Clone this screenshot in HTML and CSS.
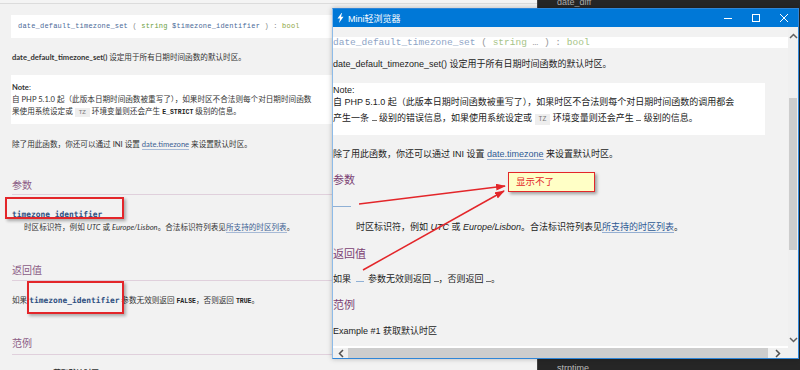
FILE: index.html
```html
<!DOCTYPE html>
<html lang="zh-CN">
<head>
  <meta charset="UTF-8">
  <title>Mini轻浏览器</title>
  <link rel="stylesheet" href="styles.css">
</head>
<body>

<div class="desktop">

  <!-- PHP manual page behind the window -->
  <div class="manual">
    <div class="synopsis">
      <span class="fn">date_default_timezone_set</span> <span class="op">(</span> <span class="type">string</span> <span class="fn">$timezone_identifier</span> <span class="op">) :</span> <span class="ret">bool</span>
    </div>
    <p class="lead"><b>date_default_timezone_set()</b> 设定用于所有日期时间函数的默认时区。</p>
    <div class="note">
      <div><b>Note</b>:</div>
      <div>自 PHP 5.1.0 起（此版本日期时间函数被重写了），如果时区不合法则每个对日期时间函数</div>
      <div>果使用系统设定或 <code class="tz">TZ</code> 环境变量则还会产生 <code class="const">E_STRICT</code> 级别的信息。</div>
    </div>
    <p class="text">除了用此函数，你还可以通过 INI 设置 <a class="link">date.timezone</a> 来设置默认时区。</p>

    <h2 class="section">参数</h2>
    <div class="term"><code>timezone_identifier</code></div>
    <p class="desc">时区标识符，例如 <i>UTC</i> 或 <i>Europe/Lisbon</i>。合法标识符列表见<a class="link">所支持的时区列表</a>。</p>

    <h2 class="section second">返回值</h2>
    <p class="text ret">如果 <code class="param">timezone_identifier</code> 参数无效则返回 <code class="const">FALSE</code>，否则返回 <code class="const">TRUE</code>。</p>

    <h2 class="section third">范例</h2>
    <p class="text example"><b>Example #1 获取默认时区</b></p>
  </div>

  <!-- dark function list on the right -->
  <div class="sidebar">
    <div class="side-item top">date_diff</div>
    <div class="side-item bottom">strptime</div>
  </div>
</div>

<!-- the little browser window -->
<div class="window">
  <div class="titlebar">
    <svg class="app-icon" width="7" height="10" viewBox="0 0 7 10"><path d="M4.5 0 L0.5 5.5 L3 5.5 L2 10 L6.5 3.8 L4 3.8 L5 0 Z" fill="#fff"/></svg>
    <span class="title">Mini轻浏览器</span>
    <div class="controls">
      <span class="ctl"><svg width="8" height="8" viewBox="0 0 8 8"><path d="M0 4.5 H8" stroke="#fff" stroke-width="1"/></svg></span>
      <span class="ctl"><svg width="8" height="8" viewBox="0 0 8 8"><rect x="0.5" y="0.5" width="7" height="7" fill="none" stroke="#fff" stroke-width="1"/></svg></span>
      <span class="ctl"><svg width="8" height="8" viewBox="0 0 8 8"><path d="M0 0 L8 8 M8 0 L0 8" stroke="#fff" stroke-width="1"/></svg></span>
    </div>
  </div>

  <div class="frame">
    <div class="viewport">
      <div class="m-code"><span class="m-fn">date_default_timezone_set</span> ( <span class="m-type">string</span> … ) : <span class="m-type">bool</span></div>
      <p class="m-lead">date_default_timezone_set() 设定用于所有日期时间函数的默认时区。</p>
      <div class="m-note">
        <div class="m-note-title">Note:</div>
        <p>自 PHP 5.1.0 起（此版本日期时间函数被重写了），如果时区不合法则每个对日期时间函数的调用都会<br>产生一条 <span class="blank"></span> 级别的错误信息，如果使用系统设定或 <code class="m-tz">TZ</code> 环境变量则还会产生 <span class="blank"></span> 级别的信息。</p>
      </div>
      <p class="m-text">除了用此函数，你还可以通过 INI 设置 <a class="m-link">date.timezone</a> 来设置默认时区。</p>
      <h2 class="m-head">参数</h2>
      <div class="m-term"></div>
      <p class="m-desc">时区标识符，例如 <i>UTC</i> 或 <i>Europe/Lisbon</i>。合法标识符列表见<a class="m-link">所支持的时区列表</a>。</p>
      <h2 class="m-head ret-head">返回值</h2>
      <p class="m-ret">如果 <span class="m-param"></span> 参数无效则返回 <span class="blank"></span>，否则返回 <span class="blank"></span>。</p>
      <h2 class="m-head">范例</h2>
      <p class="m-ex">Example #1 获取默认时区</p>
    </div>

    <div class="vscroll">
      <span class="arrow"><svg width="9" height="6" viewBox="0 0 9 6"><path d="M1 5 L4.5 1.5 L8 5" fill="none" stroke="#606060" stroke-width="1.5"/></svg></span>
      <span class="vthumb"></span>
      <span class="arrow"><svg width="9" height="6" viewBox="0 0 9 6"><path d="M1 1 L4.5 4.5 L8 1" fill="none" stroke="#606060" stroke-width="1.5"/></svg></span>
    </div>

    <div class="hscroll">
      <span class="harrow left"><svg width="6" height="9" viewBox="0 0 6 9"><path d="M5 1 L1.5 4.5 L5 8" fill="none" stroke="#505050" stroke-width="1.5"/></svg></span>
      <span class="hthumb"></span>
      <span class="harrow right"><svg width="6" height="9" viewBox="0 0 6 9"><path d="M1 1 L4.5 4.5 L1 8" fill="none" stroke="#505050" stroke-width="1.5"/></svg></span>
    </div>
    <div class="corner"></div>
  </div>
</div>

<!-- red annotations drawn on top of the screenshot -->
<div class="mark mark-term"></div>
<div class="mark mark-param"></div>
<div class="callout">显示不了</div>
<svg class="arrows" width="800" height="370" viewBox="0 0 800 370">
  <defs>
    <marker id="head" markerWidth="10" markerHeight="7" refX="9" refY="3.5" orient="auto" markerUnits="userSpaceOnUse">
      <path d="M0 0 L10 3.5 L0 7 Z" fill="#e3262a"/>
    </marker>
  </defs>
  <line x1="359" y1="204" x2="505" y2="186" stroke="#e3262a" stroke-width="1.5" marker-end="url(#head)"/>
  <line x1="363" y1="270" x2="504" y2="191" stroke="#e3262a" stroke-width="1.5" marker-end="url(#head)"/>
</svg>

</body>
</html>
```

FILE: styles.css
```css
body {
  margin: 0;
  width: 800px;
  height: 370px;
  overflow: hidden;
  position: relative;
  background-color: #f4f4f4;
  font-family: "Lato", "Noto Sans CJK SC", sans-serif;
  color: #333;
}

p, h2 {
  margin: 0;
}

.desktop {
  display: flex;
  height: 370px;
}

/* ---------- manual page ---------- */

.manual {
  width: 537px;
  flex: none;
  box-sizing: border-box;
  margin-top: 3px;
  padding: 11px 0 0 12px;
  border-top: 1px solid #dcdcdc;
  background-color: #f2f2f2;
  font-size: 7.6px;
  line-height: 12px;
  white-space: nowrap;
  overflow: hidden;
}

.synopsis {
  margin-left: -1px;
  height: 23px;
  line-height: 23px;
  padding-left: 7px;
  background: #fff;
  font-family: "Liberation Mono", monospace;
  font-size: 7px;
  letter-spacing: 0.2px;
}

.synopsis .fn {
  color: #4b6a98;
}

.synopsis .op {
  color: #888;
}

.synopsis .type {
  color: #6c9e3e;
}

.synopsis .ret {
  color: #8ea53f;
}

.lead {
  margin-top: 13px;
}

.note {
  margin: 12px 0 0 -1px;
  padding: 6px 0 5px 1px;
  background: #fff;
}

.note b {
  font-weight: 700;
}

code {
  font-family: "DejaVu Sans Mono", monospace;
}

.const {
  font-family: "Liberation Mono", monospace;
  font-size: 6.5px;
  font-weight: bold;
  color: #222;
}

.tz {
  font-family: "Liberation Mono", monospace;
  font-size: 6px;
  color: #777;
  background: #eee;
  padding: 1px 4px;
}

.text {
  margin-top: 14px;
}

.link {
  color: #3d5f92;
  border-bottom: 1px solid #a7bad6;
}

.section {
  margin-top: 28px;
  padding-bottom: 2px;
  margin-right: 12px;
  border-bottom: 1px solid #e0d0dc;
  font-size: 10px;
  line-height: 14px;
  font-weight: normal;
  color: #8c5d86;
}

.section.second {
  margin-top: 30px;
  padding-bottom: 3px;
}

.section.third {
  margin-top: 28px;
  padding-bottom: 4px;
}

.term {
  margin-top: 13px;
}

.term code,
.param {
  font-size: 7.9px;
  font-weight: bold;
  color: #2e4f80;
}

.desc {
  padding-left: 12px;
}

.ret {
  margin-top: 13px;
}

.example {
  margin-top: 12px;
}

/* ---------- dark list on the right ---------- */

.sidebar {
  flex: 1;
  background-color: #262626;
  border-left: 1px solid #404040;
  display: flex;
  flex-direction: column;
  justify-content: space-between;
  font-family: "Liberation Sans", sans-serif;
  font-size: 9px;
  line-height: 11px;
  color: #aaa;
}

.side-item {
  padding-left: 19px;
}

.side-item.top {
  margin-top: -3px;
}

.side-item.bottom {
  margin-bottom: -4px;
  color: #bbb;
}

/* ---------- mini browser window ---------- */

.window {
  position: absolute;
  left: 332px;
  top: 8px;
  width: 467px;
  height: 351px;
  box-sizing: border-box;
  border: 1px solid #2f86d8;
  border-left-color: #8dbbe8;
  background: #f2f2f2;
  box-shadow: 0 0 5px rgba(0, 0, 0, 0.25);
  display: flex;
  flex-direction: column;
  font-family: "Liberation Sans", "Noto Sans CJK SC", sans-serif;
  font-size: 9px;
  color: #222;
}

.titlebar {
  height: 18px;
  flex: none;
  background: #0078d7;
  color: #fff;
  display: flex;
  align-items: center;
}

.app-icon {
  margin-left: 4px;
}

.title {
  margin-left: 4px;
  font-size: 9px;
}

.controls {
  margin-left: auto;
  display: flex;
}

.ctl {
  width: 28px;
  height: 18px;
  display: flex;
  align-items: center;
  justify-content: center;
}

.frame {
  flex: 1;
  display: grid;
  grid-template-columns: 1fr 10px;
  grid-template-rows: 1fr 10px;
  min-height: 0;
}

.viewport {
  overflow: hidden;
  white-space: nowrap;
  padding-top: 10px;
  border-bottom: 2px solid #fff;
  line-height: 12px;
}

.m-code {
  height: 11px;
  line-height: 11px;
  background: #fff;
  font-family: "Liberation Mono", monospace;
  font-size: 9.5px;
  color: #999;
}

.m-fn {
  color: #8ea4c6;
}

.m-type {
  color: #a6c487;
}

.m-lead {
  margin-top: 10px;
}

.m-note {
  margin-top: 13px;
  width: 432px;
  padding: 1px 0 7px;
  background: #fff;
}

.m-note p {
  margin-top: -2px;
  line-height: 16px;
}

.blank {
  display: inline-block;
  width: 5px;
  border-bottom: 1px solid #6f6f6f;
}

.m-tz {
  font-family: "Liberation Mono", monospace;
  font-size: 6.5px;
  color: #777;
  background: #eee;
  padding: 2px 4px;
}

.m-text {
  margin-top: 13px;
}

.m-link {
  color: #2f5a94;
  border-bottom: 1px solid #95afd2;
}

.m-head {
  margin-top: 13px;
  font-size: 11px;
  line-height: 14px;
  font-weight: normal;
  color: #7b3f72;
}

.ret-head {
  margin-top: 14px;
}

.m-term {
  margin-top: 19px;
  width: 18px;
  border-top: 1px solid #8fb0d5;
}

.m-desc {
  margin-top: 14px;
  padding-left: 23px;
}

.m-ret {
  margin-top: 12px;
}

.m-param {
  display: inline-block;
  width: 8px;
  margin: 0 2px;
  border-bottom: 1px solid #8fb0d5;
}

.m-ex {
  margin-top: 13px;
}

.vscroll {
  background: #f0f0f0;
  display: flex;
  flex-direction: column;
  align-items: center;
}

.arrow {
  height: 17px;
  display: flex;
  align-items: center;
}

.vthumb {
  width: 8px;
  height: 152px;
  margin-top: 54px;
  background: #cdcdcd;
  flex: none;
}

.vscroll .arrow:last-child {
  margin-top: auto;
}

.hscroll {
  display: flex;
  background: #f0f0f0;
}

.harrow {
  display: flex;
  align-items: center;
  justify-content: center;
}

.harrow.left {
  width: 15px;
}

.harrow.right {
  width: 20px;
}

.hthumb {
  flex: 1;
  background: #cdcdcd;
}

.corner {
  background: #f0f0f0;
}

/* ---------- annotations ---------- */

.mark {
  position: absolute;
  box-sizing: border-box;
  border: 2px solid #e3262a;
  box-shadow: 2px 2px 3px rgba(0, 0, 0, 0.3);
}

.mark-term {
  left: 5px;
  top: 197px;
  width: 119px;
  height: 22px;
}

.mark-param {
  left: 27px;
  top: 281px;
  width: 97px;
  height: 33px;
}

.callout {
  position: absolute;
  left: 508px;
  top: 172px;
  width: 87px;
  height: 20px;
  box-sizing: border-box;
  padding-left: 7px;
  background: #ffffc6;
  border: 1.5px solid #e3262a;
  box-shadow: 2px 2px 3px rgba(0, 0, 0, 0.35);
  font-family: "Noto Sans CJK SC", sans-serif;
  font-size: 9.5px;
  line-height: 17px;
  color: #e3262a;
}

.arrows {
  position: absolute;
  left: 0;
  top: 0;
  pointer-events: none;
}
```
